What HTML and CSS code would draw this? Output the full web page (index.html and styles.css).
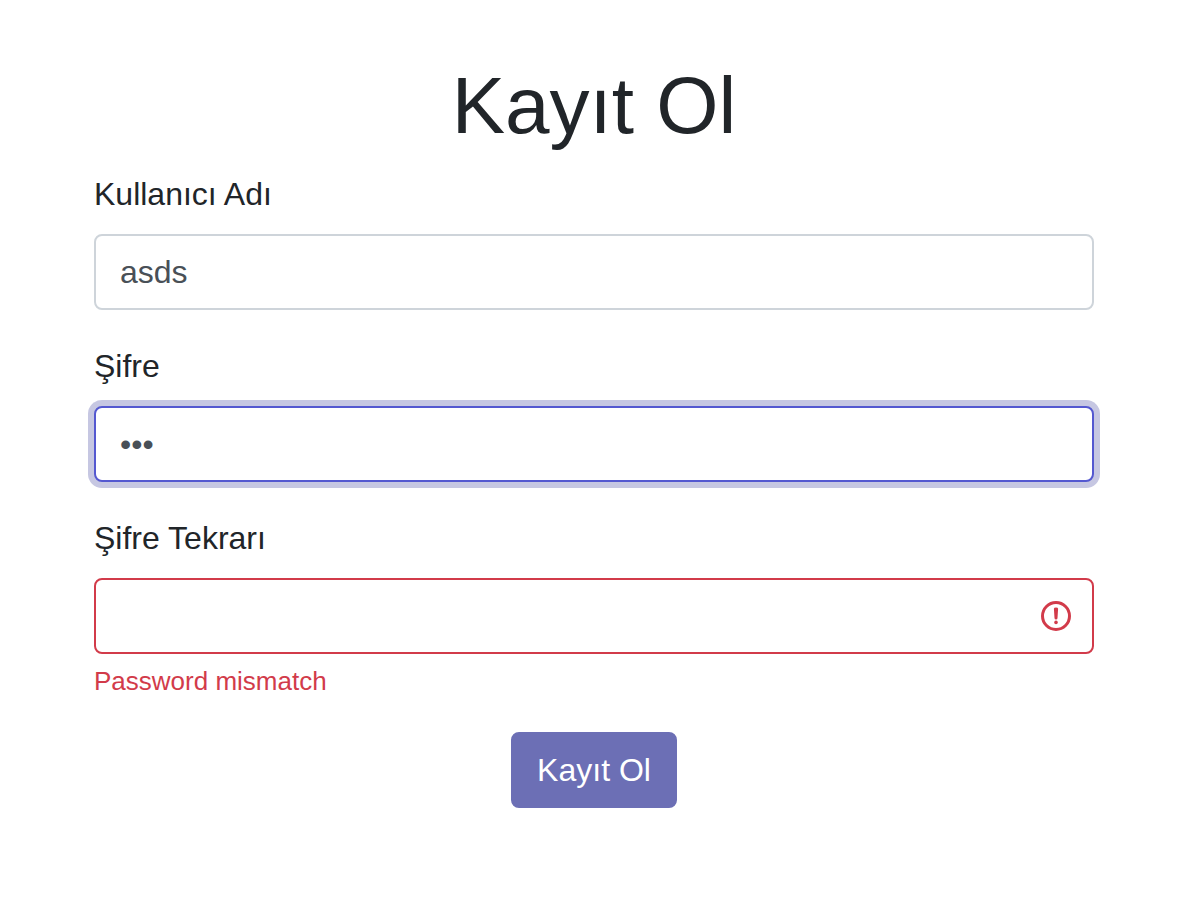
FILE: index.html
```html
<!DOCTYPE html>
<html lang="tr">
<head>
<meta charset="utf-8">
<meta name="viewport" content="width=device-width, initial-scale=1">
<title>Kayıt Ol</title>
<link rel="stylesheet" href="styles.css">
</head>
<body>
<main class="page">
  <form class="signup">
    <h1 class="title">Kayıt Ol</h1>
    <div class="field">
      <label class="label" for="username">Kullanıcı Adı</label>
      <input class="input" id="username" type="text" value="asds">
    </div>
    <div class="field">
      <label class="label" for="password">Şifre</label>
      <input class="input input-focused" id="password" type="password" value="123">
    </div>
    <div class="field">
      <label class="label" for="repeat">Şifre Tekrarı</label>
      <div class="control">
        <input class="input input-invalid" id="repeat" type="password" aria-describedby="repeat-error">
        <svg class="alert-icon" viewBox="0 0 16 16" aria-hidden="true">
          <circle cx="8" cy="8" r="6.75" fill="none" stroke="currentColor" stroke-width="1.5"/>
          <path d="M6.95 4.4q0-.7 1.05-.7t1.05.7L8.75 9a.75.75 0 0 1-1.5 0z" fill="currentColor"/>
          <circle cx="8" cy="11.2" r=".9" fill="currentColor"/>
        </svg>
      </div>
      <p class="error" id="repeat-error">Password mismatch</p>
    </div>
    <div class="actions">
      <button class="button" type="button">Kayıt Ol</button>
    </div>
  </form>
</main>
</body>
</html>
```
FILE: styles.css
```css
*, *::before, *::after {
  box-sizing: border-box;
}

body {
  margin: 0;
  background: #fff;
  color: #212529;
  font: 32px/48px "Liberation Sans", Arial, sans-serif;
}

.page {
  padding: 58px 106px 56px 94px;
}

.title {
  margin: 0 0 16px;
  font-size: 80px;
  font-weight: 400;
  line-height: 96px;
  text-align: center;
}

.field {
  margin-bottom: 32px;
}

.label {
  display: block;
  margin-bottom: 16px;
}

.input {
  display: block;
  width: 100%;
  height: 76px;
  padding: 12px 24px;
  border: 2px solid #ced4da;
  border-radius: 8px;
  outline: 0;
  background: #fff;
  color: #495057;
  font: inherit;
}

.input-focused {
  border-color: #5458d0;
  box-shadow: 0 0 0 6px #c6c7e2;
}

.control {
  position: relative;
}

.input-invalid {
  padding-right: 76px;
  border-color: #d23b4a;
}

.alert-icon {
  position: absolute;
  top: 22px;
  right: 22px;
  width: 32px;
  height: 32px;
  color: #d23b4a;
}

.error {
  margin: 8px 0 0;
  color: #d23b4a;
  font-size: 26px;
  line-height: 38px;
}

.actions {
  display: flex;
  justify-content: center;
}

.button {
  padding: 12px 24px;
  border: 2px solid #6c6fb5;
  border-radius: 8px;
  background: #6c6fb5;
  color: #fff;
  font: inherit;
}
```
